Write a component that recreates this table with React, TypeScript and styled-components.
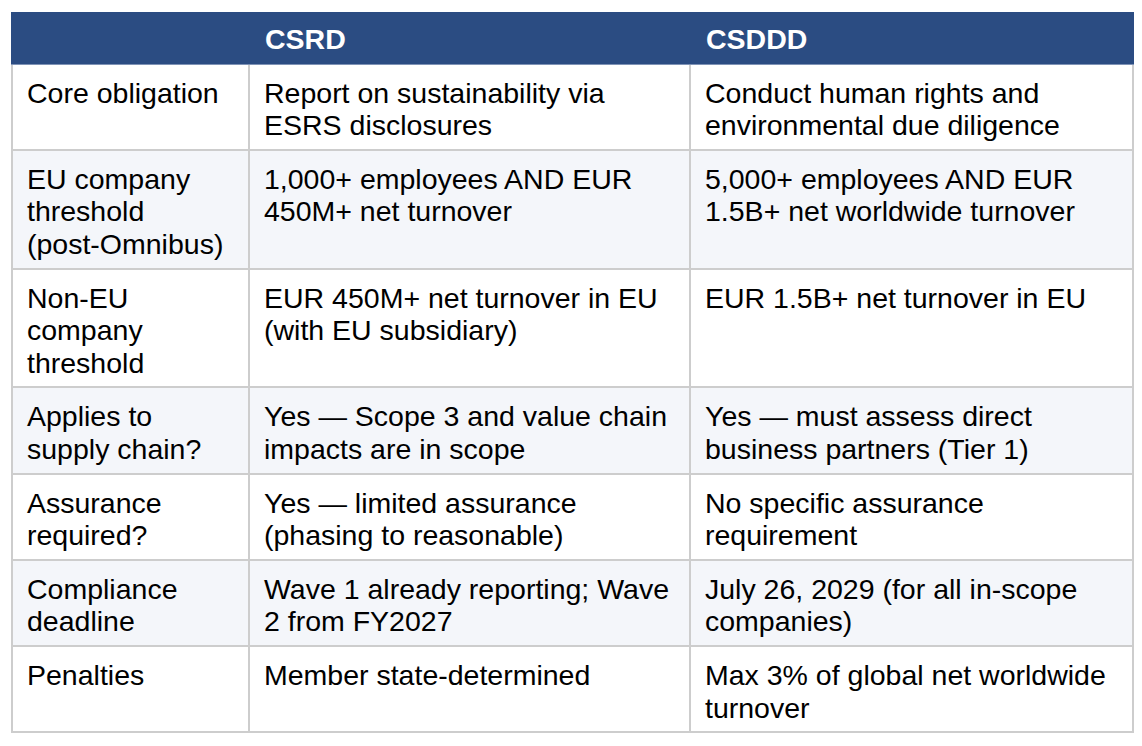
import type { ReactNode } from 'react'
import styled, { createGlobalStyle } from 'styled-components'

const GlobalStyle = createGlobalStyle`
  html, body {
    margin: 0;
    padding: 0;
    background: #ffffff;
  }

  body {
    font-family: 'Liberation Sans', Arial, Helvetica, sans-serif;
    color: #000000;
  }
`

const Page = styled.main`
  padding-top: 12px;
  padding-left: 11px;
  width: 1142px;
  box-sizing: border-box;
`

const Table = styled.table`
  width: 1123px;
  table-layout: fixed;
  border-collapse: separate;
  border-spacing: 0;
  font-size: 28.5px;
  line-height: 32.6px;
`

const HeadCell = styled.th`
  background-color: #2b4c82;
  color: #ffffff;
  font-weight: 700;
  text-align: left;
  padding: 11px 13px 8px 15px;
  border-bottom: 1px solid #7f93b6;
  box-shadow: inset 0 -1px 0 #2b4c82;
`

const Row = styled.tr<{ $shaded?: boolean }>`
  background-color: ${(p) => (p.$shaded ? '#f4f6fa' : '#ffffff')};
`

const Cell = styled.td<{ $first?: boolean }>`
  vertical-align: top;
  padding: 12px 13px 7px 14px;
  border-right: 2px solid #cdcdcd;
  border-bottom: 2px solid #cdcdcd;
  border-left: ${(p) => (p.$first ? '2px solid #cdcdcd' : '0')};
`

const NoWrap = styled.span`
  white-space: nowrap;
`

type Entry = { label: ReactNode; key: string; csrd: string; csddd: string }

const rows: Entry[] = [
  {
    key: 'core',
    label: 'Core obligation',
    csrd: 'Report on sustainability via ESRS disclosures',
    csddd: 'Conduct human rights and environmental due diligence',
  },
  {
    key: 'eu',
    label: (
      <>
        EU company threshold <NoWrap>(post-Omnibus)</NoWrap>
      </>
    ),
    csrd: '1,000+ employees AND EUR 450M+ net turnover',
    csddd: '5,000+ employees AND EUR 1.5B+ net worldwide turnover',
  },
  {
    key: 'non-eu',
    label: 'Non-EU company threshold',
    csrd: 'EUR 450M+ net turnover in EU (with EU subsidiary)',
    csddd: 'EUR 1.5B+ net turnover in EU',
  },
  {
    key: 'supply',
    label: 'Applies to supply chain?',
    csrd: 'Yes \u2014 Scope 3 and value chain impacts are in scope',
    csddd: 'Yes \u2014 must assess direct business partners (Tier 1)',
  },
  {
    key: 'assurance',
    label: 'Assurance required?',
    csrd: 'Yes \u2014 limited assurance (phasing to reasonable)',
    csddd: 'No specific assurance requirement',
  },
  {
    key: 'deadline',
    label: 'Compliance deadline',
    csrd: 'Wave 1 already reporting; Wave 2 from FY2027',
    csddd: 'July 26, 2029 (for all in-scope companies)',
  },
  {
    key: 'penalties',
    label: 'Penalties',
    csrd: 'Member state-determined',
    csddd: 'Max 3% of global net worldwide turnover',
  },
]

const App = () => (
  <Page>
    <GlobalStyle />
    <Table>
      <colgroup>
        <col style={{ width: 239 }} />
        <col style={{ width: 441 }} />
        <col style={{ width: 443 }} />
      </colgroup>
      <thead>
        <tr>
          <HeadCell></HeadCell>
          <HeadCell>CSRD</HeadCell>
          <HeadCell>CSDDD</HeadCell>
        </tr>
      </thead>
      <tbody>
        {rows.map((row, i) => (
          <Row key={row.key} $shaded={i % 2 === 1}>
            <Cell $first>{row.label}</Cell>
            <Cell>{row.csrd}</Cell>
            <Cell>{row.csddd}</Cell>
          </Row>
        ))}
      </tbody>
    </Table>
  </Page>
)

export default App
